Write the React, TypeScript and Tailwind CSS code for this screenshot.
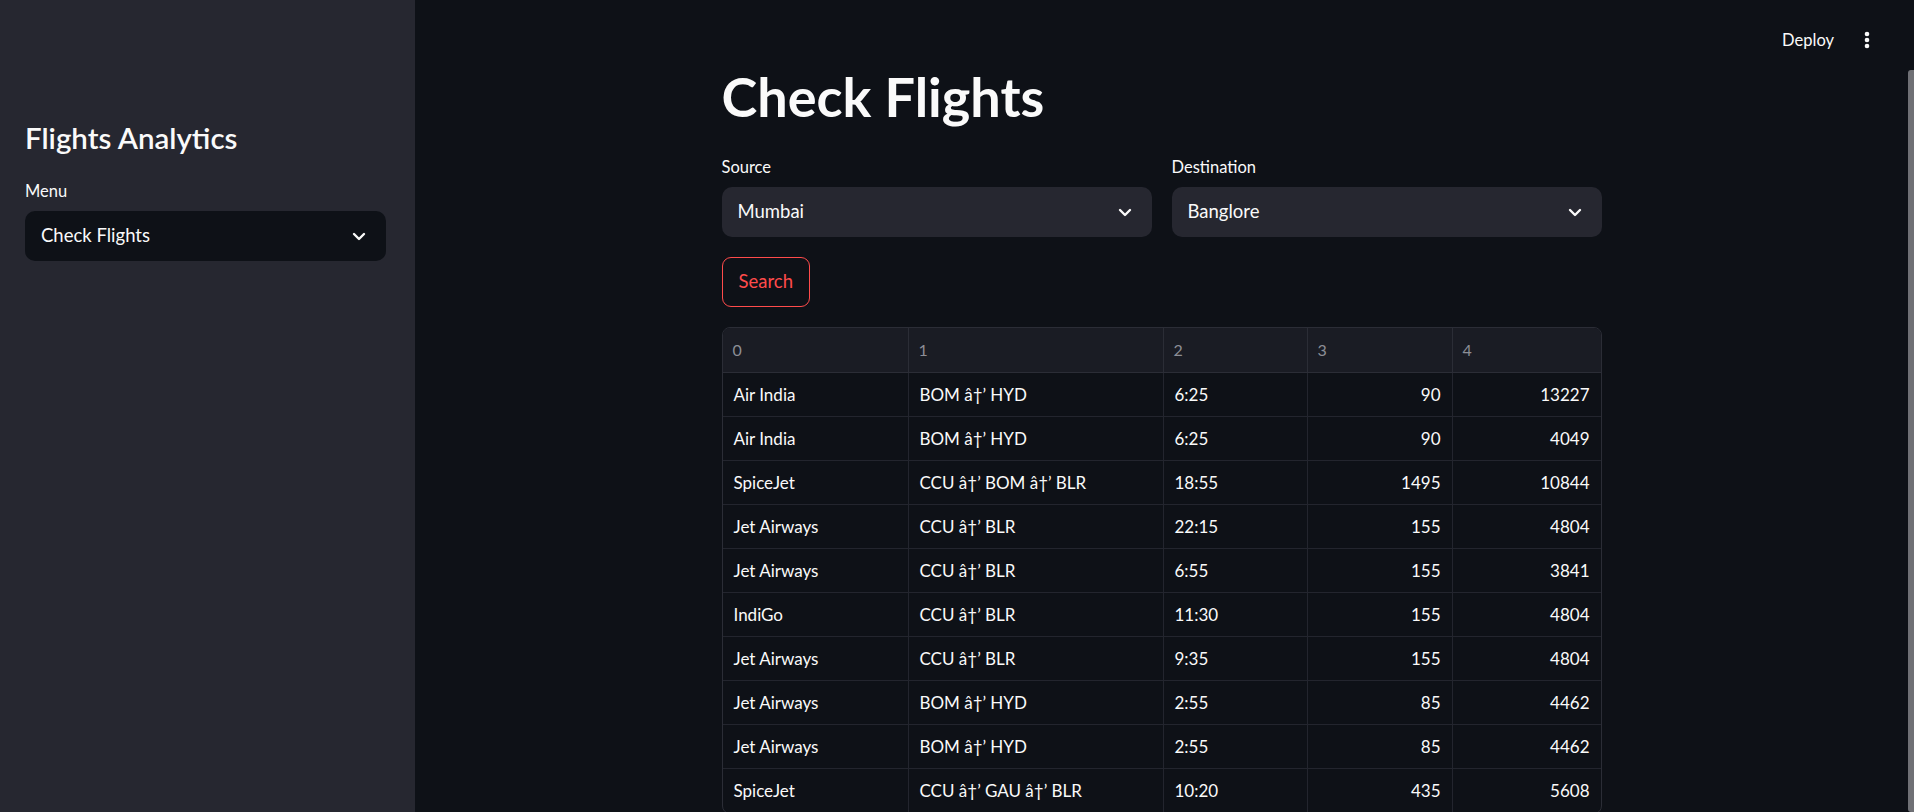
import React from "react";

const rows: [string, string, string, string, string][] = [
  ["Air India", "BOM â†’ HYD", "6:25", "90", "13227"],
  ["Air India", "BOM â†’ HYD", "6:25", "90", "4049"],
  ["SpiceJet", "CCU â†’ BOM â†’ BLR", "18:55", "1495", "10844"],
  ["Jet Airways", "CCU â†’ BLR", "22:15", "155", "4804"],
  ["Jet Airways", "CCU â†’ BLR", "6:55", "155", "3841"],
  ["IndiGo", "CCU â†’ BLR", "11:30", "155", "4804"],
  ["Jet Airways", "CCU â†’ BLR", "9:35", "155", "4804"],
  ["Jet Airways", "BOM â†’ HYD", "2:55", "85", "4462"],
  ["Jet Airways", "BOM â†’ HYD", "2:55", "85", "4462"],
  ["SpiceJet", "CCU â†’ GAU â†’ BLR", "10:20", "435", "5608"],
];

const Chevron = () => (
  <svg width="14" height="9" viewBox="0 0 14 9" fill="none">
    <path d="M2 2l5 5 5-5" stroke="#fafafa" strokeWidth="2.4" strokeLinecap="round" strokeLinejoin="round" />
  </svg>
);

const Select = ({ value, dark }: { value: string; dark?: boolean }) => (
  <div
    className={`flex h-[50px] items-center justify-between rounded-[10px] pl-4 pr-[20px] text-[18.5px] text-[#fafafa] ${
      dark ? "bg-[#0e1117]" : "bg-[#262730]"
    }`}
  >
    <span>{value}</span>
    <Chevron />
  </div>
);

const App = () => {
  return (
    <div className="flex h-[812px] w-[1914px] overflow-hidden bg-[#0e1117] font-['Lato','Noto_Sans',sans-serif] text-[#fafafa]">
      {/* sidebar */}
      <aside className="w-[415px] shrink-0 bg-[#262730] px-[25px] pt-[119px]">
        <h2 className="text-[29.5px] font-semibold leading-[38px]">Flights Analytics</h2>
        <div className="mt-[24px] text-[16.5px] leading-[20px]">Menu</div>
        <div className="mt-[10px] w-[361px]">
          <Select value="Check Flights" dark />
        </div>
      </aside>

      {/* main */}
      <main className="relative flex flex-1">
        <div className="absolute right-[44px] top-[28px] flex items-center gap-[30px]">
          <span className="text-[16.5px]">Deploy</span>
          <svg width="6" height="18" viewBox="0 0 6 18" fill="#fafafa">
            <circle cx="3" cy="3" r="2.3" />
            <circle cx="3" cy="9" r="2.3" />
            <circle cx="3" cy="15" r="2.3" />
          </svg>
        </div>

        <div className="flex flex-1 justify-center pt-[70px]">
          <div className="w-[880px]">
            <h1 className="text-[54px] font-bold leading-[54px]">Check Flights</h1>

            <div className="mt-[33px] grid grid-cols-2 gap-[20px]">
              <div>
                <div className="text-[16.5px] leading-[20px]">Source</div>
                <div className="mt-[10px]">
                  <Select value="Mumbai" />
                </div>
              </div>
              <div>
                <div className="text-[16.5px] leading-[20px]">Destination</div>
                <div className="mt-[10px]">
                  <Select value="Banglore" />
                </div>
              </div>
            </div>

            <button className="mt-[20px] flex h-[50px] items-center rounded-[9px] border border-[#ff4b4b] px-[16px] text-[18.5px] text-[#ff4b4b]">
              Search
            </button>

            <div className="mt-[20px] w-[880px] overflow-hidden rounded-[8px] border border-[#2b2d36]">
              <div className="grid grid-cols-[186px_255px_144px_145px_148px] bg-[#1a1c24] text-[16px] text-[#8c8e96]">
                {["0", "1", "2", "3", "4"].map((h, i) => (
                  <div
                    key={h}
                    className={`flex h-[45px] items-center border-b border-[#2b2d36] px-[10px] ${
                      i < 4 ? "border-r" : ""
                    }`}
                  >
                    {h}
                  </div>
                ))}
              </div>
              {rows.map((r, ri) => (
                <div key={ri} className="grid grid-cols-[186px_255px_144px_145px_148px] text-[17px]">
                  {r.map((c, i) => (
                    <div
                      key={i}
                      className={`flex h-[44px] items-center border-b border-[#23252e] px-[11px] ${
                        i < 4 ? "border-r" : ""
                      } ${i >= 3 ? "justify-end" : ""}`}
                    >
                      {c}
                    </div>
                  ))}
                </div>
              ))}
            </div>
          </div>
        </div>

        {/* scrollbar */}
        <div className="w-[6px] shrink-0 pt-[70px]">
          <div className="h-full rounded-l-[3px] bg-[#6f7075]" />
        </div>
      </main>
    </div>
  );
};

export default App;
